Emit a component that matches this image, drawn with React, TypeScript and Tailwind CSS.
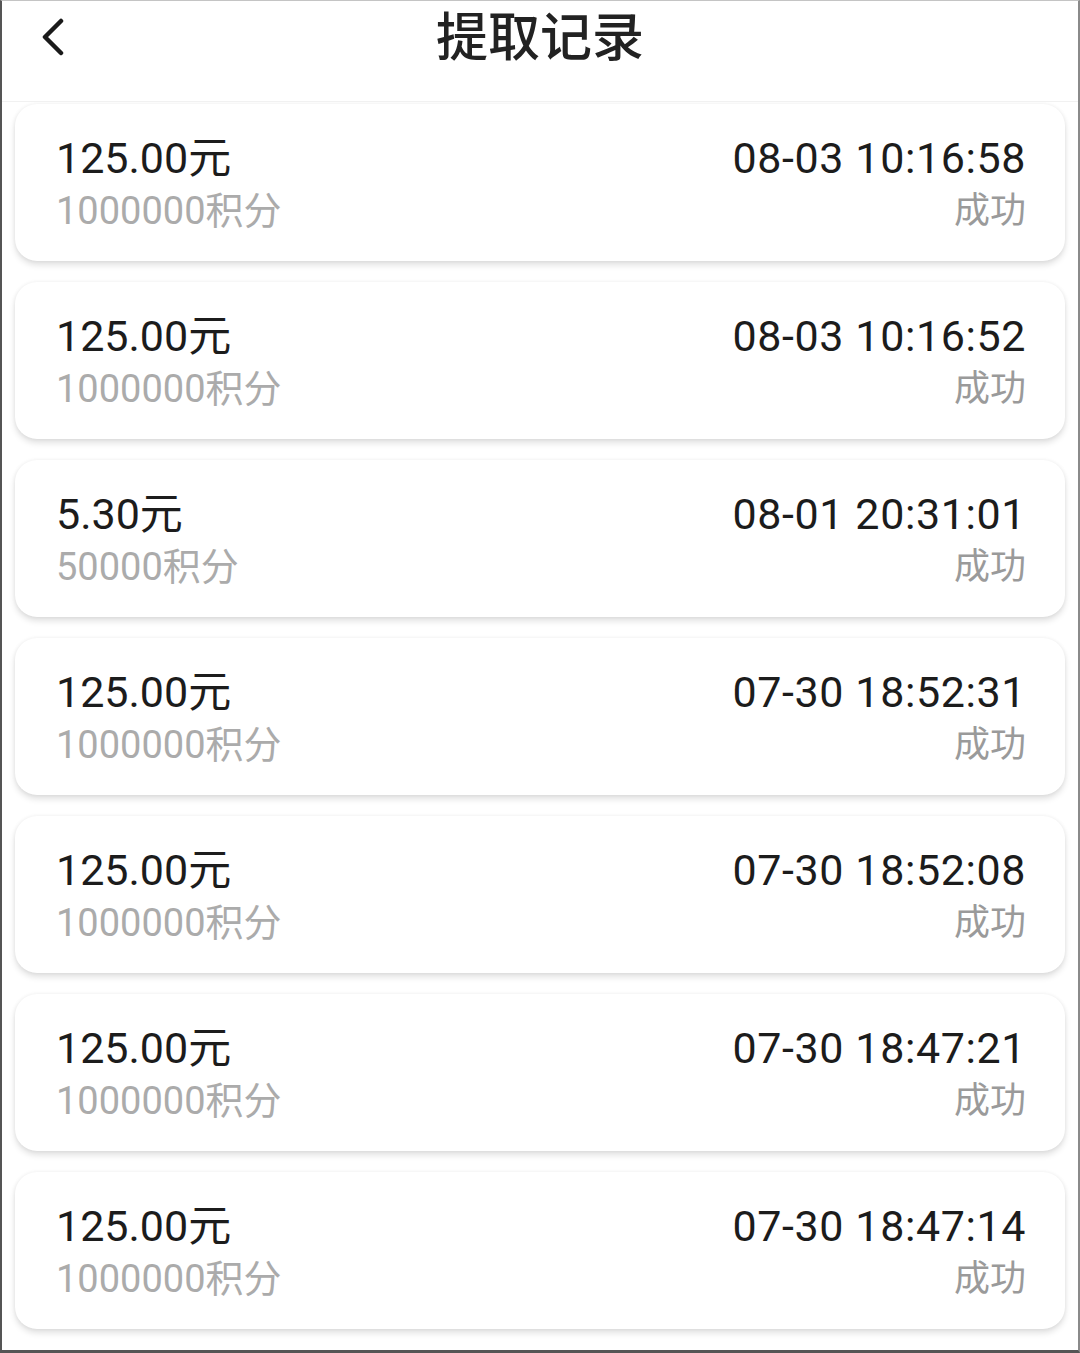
const records = [
  { amount: '125.00元', points: '1000000积分', time: '08-03 10:16:58' },
  { amount: '125.00元', points: '1000000积分', time: '08-03 10:16:52' },
  { amount: '5.30元', points: '50000积分', time: '08-01 20:31:01' },
  { amount: '125.00元', points: '1000000积分', time: '07-30 18:52:31' },
  { amount: '125.00元', points: '1000000积分', time: '07-30 18:52:08' },
  { amount: '125.00元', points: '1000000积分', time: '07-30 18:47:21' },
  { amount: '125.00元', points: '1000000积分', time: '07-30 18:47:14' },
]

const font = { fontFamily: 'Roboto, "Noto Sans CJK SC", sans-serif' }

export default function App() {
  return (
    <div
      className="w-[1080px] h-[1353px] bg-white overflow-hidden border-l-2 border-l-[#555] border-t border-t-[#c4c4c4] border-r-2 border-r-[#8a8a8a] border-b-[3px] border-b-[#555] flex flex-col"
      style={font}
    >
      <header className="h-[101px] shrink-0 flex items-start justify-center relative border-b border-[#f1f1f1]">
        <button type="button" aria-label="Back" className="absolute left-[38px] top-[17px] w-[26px] h-[38px] flex items-center justify-center">
          <svg width="26" height="38" viewBox="0 0 26 38" fill="none">
            <path d="M21 3 L5 19 L21 35" stroke="#1a1a1a" strokeWidth="4.5" strokeLinecap="round" strokeLinejoin="round" />
          </svg>
        </button>
        <h1 className="mt-[8px] text-[52px] leading-[60px] font-medium text-[#222]">提取记录</h1>
      </header>
      <div className="flex flex-col gap-[21px] pl-[13px] pr-[13px] pt-[2px]">
        {records.map((r, i) => (
          <div
            key={i}
            className="h-[157px] rounded-[22px] bg-white shadow-[0_4px_6px_rgba(0,0,0,0.12),0_0_4px_rgba(0,0,0,0.06)] flex justify-between items-start pl-[41px] pr-[39px] pt-[28px]"
          >
            <div className="flex flex-col">
              <span className="text-[43px] leading-[53px] text-[#1c1c1c]">{r.amount}</span>
              <span className="text-[38px] leading-[53px] text-[#ababab]">{r.points}</span>
            </div>
            <div className="flex flex-col items-end">
              <span className="text-[43px] leading-[53px] tracking-[0.6px] text-[#1c1c1c]">{r.time}</span>
              <span className="text-[36px] leading-[53px] text-[#9a9a9a]">成功</span>
            </div>
          </div>
        ))}
      </div>
    </div>
  )
}
